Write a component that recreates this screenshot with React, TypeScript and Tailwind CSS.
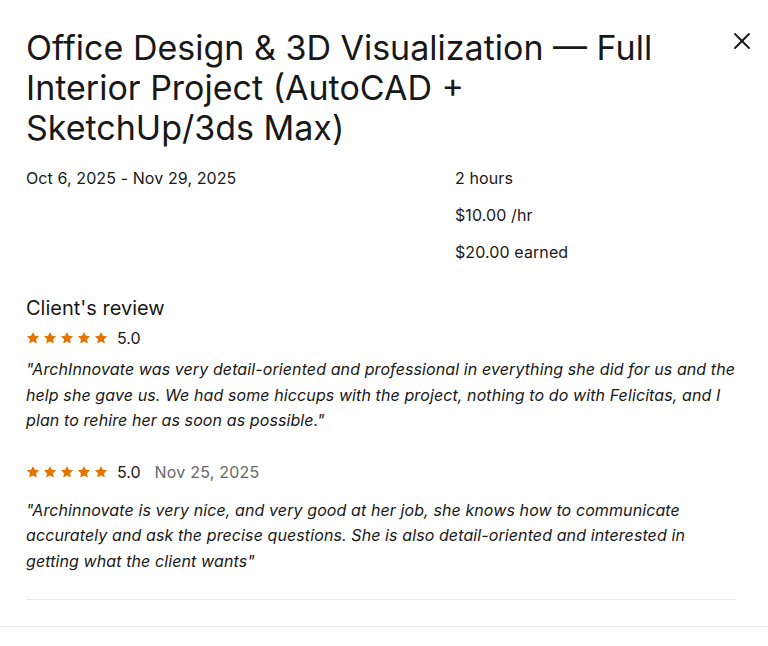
import { X } from "lucide-react";

const font = { fontFamily: 'Inter, "Liberation Sans", Arial, sans-serif' };

function Stars() {
    return (
        <div className="flex items-center gap-[3px]">
            {[0, 1, 2, 3, 4].map((i) => (
                <svg key={i} viewBox="0 0 24 24" className="h-[14px] w-[14px] fill-[#e37400]">
                    <path d="M12 1.5l3.2 6.7 7.3.9-5.4 5.1 1.4 7.3L12 18l-6.5 3.5 1.4-7.3-5.4-5.1 7.3-.9z" />
                </svg>
            ))}
        </div>
    );
}

const reviews = [
    {
        rating: "5.0",
        date: "",
        text: '"ArchInnovate was very detail-oriented and professional in everything she did for us and the help she gave us. We had some hiccups with the project, nothing to do with Felicitas, and I plan to rehire her as soon as possible."',
    },
    {
        rating: "5.0",
        date: "Nov 25, 2025",
        text: '"Archinnovate is very nice, and very good at her job, she knows how to communicate accurately and ask the precise questions. She is also detail-oriented and interested in getting what the client wants"',
    },
];

export default function App() {
    return (
        <div className="min-h-[646px] w-[768px] bg-white text-[#181818]" style={font}>
            <div className="pl-[26px] pr-[32px] pt-[28px]">
                {/* Header */}
                <div className="flex items-start justify-between">
                    <h1 className="max-w-[660px] text-[34px] leading-[40px] text-[#181818]">
                        Office Design &amp; 3D Visualization — Full Interior Project (AutoCAD + SketchUp/3ds Max)
                    </h1>
                    <button type="button" aria-label="Close" className="mr-[-20px] mt-[-1px] text-[#181818]">
                        <X className="h-[28px] w-[28px]" strokeWidth={1.6} />
                    </button>
                </div>

                {/* Contract details */}
                <div className="mt-[19px] flex text-[16px] leading-[22px] tracking-[0.1px]">
                    <div className="w-[429px]">Oct 6, 2025 - Nov 29, 2025</div>
                    <div className="flex flex-col gap-[15px]">
                        <span>2 hours</span>
                        <span>$10.00 /hr</span>
                        <span>$20.00 earned</span>
                    </div>
                </div>

                {/* Reviews */}
                <h2 className="mt-[32px] text-[20px] leading-[26px]">Client's review</h2>
                <div className="border-b border-[#e9e9e9] pb-[25px]">
                    {reviews.map((review, i) => (
                        <div key={i} className={i === 0 ? "mt-[6px]" : "mt-[27px]"}>
                            <div className="flex items-center gap-[9px] text-[16px] leading-[22px]">
                                <Stars />
                                <span className="text-[#181818]">{review.rating}</span>
                                {review.date && (
                                    <span className="ml-[5px] text-[16px] tracking-[0.2px] text-[#676767]">
                                        {review.date}
                                    </span>
                                )}
                            </div>
                            <p
                                className={`${i === 0 ? "mt-[8px]" : "mt-[15px]"} text-[16px] italic leading-[25.5px] tracking-[0.1px] text-[#181818]`}
                            >
                                {review.text}
                            </p>
                        </div>
                    ))}
                </div>
            </div>
            <div className="mt-[26px] border-b border-[#e9e9e9]" />
        </div>
    );
}
